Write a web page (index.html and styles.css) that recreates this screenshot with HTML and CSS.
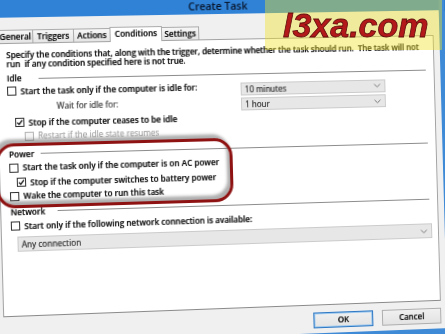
FILE: index.html
```html
<!DOCTYPE html>
<html lang="en">
<head>
<meta charset="utf-8">
<title>Create Task</title>
<link rel="stylesheet" href="styles.css">
</head>
<body>
<div class="window">
  <div class="titlebar">Create Task</div>
  <div class="client">
    <div class="tabs">
      <div class="tab w-general">General</div>
      <div class="tab w-triggers">Triggers</div>
      <div class="tab w-actions">Actions</div>
      <div class="tab active w-conditions">Conditions</div>
      <div class="tab w-settings">Settings</div>
    </div>
    <div class="panel">
      <p class="desc">Specify the conditions that, along with the trigger, determine whether the task should run.&nbsp; The task will not<br>run&nbsp; if any condition specified here is not true.</p>

      <div class="grouphead idle"><span class="glabel">Idle</span><i class="rule"></i></div>
      <div class="idle-grid">
        <div class="check"><span class="box"></span><span>Start the task only if the computer is idle for:</span></div>
        <div class="select s1"><span>10 minutes</span><svg class="chev" viewBox="0 0 7 4" width="7" height="4"><polyline points="0.5,0.5 3.5,3.5 6.5,0.5"/></svg></div>
        <div class="wait">Wait for idle for:</div>
        <div class="select s2"><span>1 hour</span><svg class="chev" viewBox="0 0 7 4" width="7" height="4"><polyline points="0.5,0.5 3.5,3.5 6.5,0.5"/></svg></div>
      </div>
      <div class="check ind1 r-stop"><span class="box"><svg viewBox="0 0 7 7" width="7" height="7"><path d="M1 3.6 L2.8 5.4 L6 1.3"/></svg></span><span>Stop if the computer ceases to be idle</span></div>
      <div class="check ind2 disabled r-restart"><span class="box"></span><span>Restart if the idle state resumes</span></div>

      <div class="grouphead power"><span class="glabel">Power</span><i class="rule"></i></div>
      <div class="check r-ac"><span class="box"></span><span>Start the task only if the computer is on AC power</span></div>
      <div class="check ind1 r-batt"><span class="box"><svg viewBox="0 0 7 7" width="7" height="7"><path d="M1 3.6 L2.8 5.4 L6 1.3"/></svg></span><span>Stop if the computer switches to battery power</span></div>
      <div class="check r-wake"><span class="box"></span><span>Wake the computer to run this task</span></div>

      <div class="grouphead network"><span class="glabel">Network</span><i class="rule"></i></div>
      <div class="check r-net"><span class="box"></span><span>Start only if the following network connection is available:</span></div>
      <div class="select wide"><span>Any connection</span><svg class="chev" viewBox="0 0 7 4" width="7" height="4"><polyline points="0.5,0.5 3.5,3.5 6.5,0.5"/></svg></div>

      <div class="highlight"></div>
    </div>
    <div class="buttons">
      <div class="btn default">OK</div>
      <div class="btn">Cancel</div>
    </div>
  </div>
</div>
<div class="watermark"><span class="wm-text">l3xa.com</span></div>
</body>
</html>
```

FILE: styles.css
```css
* { box-sizing: border-box; }
html, body { margin: 0; padding: 0; }
body {
  width: 445px;
  height: 334px;
  overflow: hidden;
  position: relative;
  background: #2f7fd0;
  font-family: "Open Sans", "Noto Sans", sans-serif;
  font-size: 8.1px;
  font-weight: 600;
  color: #111;
}

.window {
  width: 461px;
  margin: -17.5px 0 0 -8px;
  background: #2f82d6;
  border: 6px solid #3f8ad6;
  border-top: 0;
  transform-origin: 230px 187px;
  transform: perspective(1000px) rotateY(4deg) rotate(-1.6deg);
}

.titlebar {
  height: 31px;
  padding-top: 17px;
  line-height: 12px;
  text-align: center;
  font-size: 10.5px;
  font-weight: 600;
  color: #08142a;
  background: #2f82d6;
}

.client {
  background: #f0f0f0;
  padding: 11px 6px 5px 4px;
  text-shadow: 0.25px 0 0 rgba(0, 0, 0, 0.55);
}

/* tabs */
.tabs {
  display: flex;
  align-items: flex-end;
  height: 14.5px;
  padding-left: 2px;
  margin-bottom: -1px;
  position: relative;
  z-index: 1;
}
.tab {
  height: 12.5px;
  margin-bottom: 1px;
  border: 1px solid #acacac;
  border-bottom: 0;
  background: linear-gradient(#f6f6f6, #e4e4e4);
  text-align: center;
  line-height: 11px;
}
.tab + .tab { margin-left: -1px; }
.tab.active {
  height: 14.5px;
  margin-bottom: 0;
  background: #fff;
  line-height: 12px;
}
.w-general { width: 35px; }
.w-triggers { width: 41px; }
.w-actions { width: 37px; }
.w-conditions { width: 52px; }
.w-settings { width: 38px; }

/* panel */
.panel {
  position: relative;
  height: 270.5px;
  background: #fff;
  border: 1px solid #a3a3a3;
  border-bottom-color: #8a8a8a;
  padding: 0 6px 0 9px;
}
.desc {
  margin: 7.5px 0 0;
  line-height: 8.5px;
  letter-spacing: -0.07px;
  white-space: nowrap;
}

.grouphead {
  display: flex;
  align-items: center;
  height: 10px;
  line-height: 10px;
}
.glabel { flex: none; }
.idle .glabel, .power .glabel { width: 31px; }
.network .glabel { width: 46px; }
.rule {
  flex: 1;
  height: 1px;
  margin-right: 2px;
  background: #8c8c8c;
}
.idle { margin-top: 5px; }
.power { margin-top: 7.5px; }
.network { margin-top: 5.5px; }

.check {
  display: flex;
  align-items: center;
  height: 10px;
  line-height: 10px;
  white-space: nowrap;
}
.box {
  flex: none;
  width: 9px;
  height: 9px;
  margin-right: 4px;
  border: 1px solid #333;
  background: #fff;
  display: flex;
  align-items: center;
  justify-content: center;
}
.box svg path {
  fill: none;
  stroke: #1a1a1a;
  stroke-width: 1.3;
}
.ind1 { margin-left: 7px; }
.ind2 { margin-left: 16px; }
.disabled { color: #8e8e8e; font-weight: 400; text-shadow: none; }
.disabled .box { border-color: #b4b4b4; background: #f6f6f6; }

.r-stop { margin-top: 0; }
.r-restart { margin-top: 3.5px; }
.r-ac { margin-top: 3.5px; }
.r-batt { margin-top: 4.5px; }
.r-wake { margin-top: 3.5px; }
.r-net { margin-top: 4px; }

.idle-grid {
  display: grid;
  grid-template-columns: 231px 147px;
  grid-template-rows: 15px 16px;
  margin-top: 2.5px;
}
.wait {
  padding-left: 48px;
  line-height: 10px;
  height: 10px;
  color: #444;
  font-weight: 400;
}
.select {
  height: 13px;
  border: 1px solid #cbcbcb;
  background: #e7e7e7;
  display: flex;
  align-items: center;
  justify-content: space-between;
  padding: 0 4px 0 3px;
  color: #333;
  font-weight: 400;
  line-height: 11px;
}
.s1 { margin-top: 1px; }
.s2 { margin-top: 1.5px; }
.select.wide {
  margin: 5.5px 0 0 6px;
  height: 15px;
}
.chev polyline {
  fill: none;
  stroke: #777;
  stroke-width: 1;
}

/* annotation ring around the Power group */
.highlight {
  position: absolute;
  left: -4px;
  top: 98px;
  width: 234px;
  height: 64px;
  border: 3px solid #8e1212;
  border-radius: 18px;
  box-shadow: -3px -4px 3px rgba(110, 110, 110, 0.55), inset -3px -4px 3px rgba(110, 110, 110, 0.55);
}

/* dialog buttons */
.buttons {
  display: flex;
  justify-content: flex-end;
  gap: 9px;
  margin-top: 6.5px;
}
.btn {
  width: 61px;
  height: 16px;
  border: 1px solid #adadad;
  background: linear-gradient(#f0f0f0, #e3e3e3);
  display: flex;
  align-items: center;
  justify-content: center;
}
.btn.default {
  border-color: #2f78c4;
  box-shadow: inset 0 0 0 1px #9cc8ee;
}

/* watermark overlay */
.watermark {
  position: absolute;
  left: 265px;
  top: 0;
  width: 177px;
  height: 50px;
  background: rgba(240, 228, 40, 0.42);
  padding: 8px 0 0 18px;
}
.wm-text {
  display: block;
  font-family: "Liberation Sans", Arial, sans-serif;
  font-weight: bold;
  font-style: italic;
  font-size: 34px;
  line-height: 34px;
  color: #b3191a;
  -webkit-text-stroke: 0.8px #5e0c0c;
}
```
